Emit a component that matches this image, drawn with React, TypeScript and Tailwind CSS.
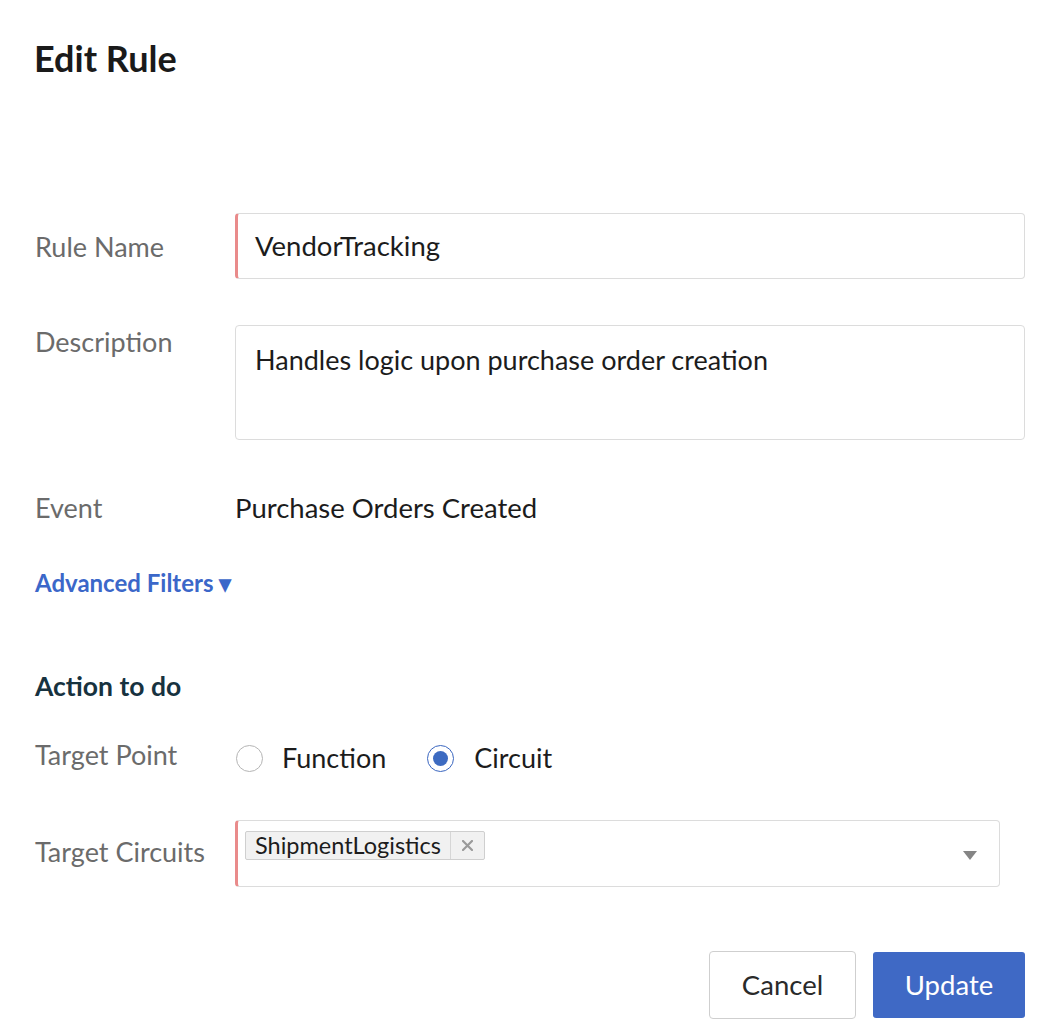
export default function App() {
  return (
    <div className="min-h-screen bg-white px-[35px] font-['Lato','Noto_Sans',sans-serif] text-[#1c1c1c]">
      <h1 className="pt-[37px] text-[36px] font-bold leading-[42px] text-[#1a1a1a] -ml-[1px]">Edit Rule</h1>

      <div className="mt-[134px] flex items-center">
        <div className="w-[200px] pt-[2px] text-[27px] leading-[34px] text-[#6b6b6b]">Rule Name</div>
        <div className="flex h-[66px] flex-1 items-center rounded-[4px] border border-l-[3px] border-[#dcdcdc] border-l-[#e98b8b] px-[17px] text-[27.5px]">
          VendorTracking
        </div>
      </div>

      <div className="mt-[46px] flex items-start">
        <div className="w-[200px] text-[27px] leading-[34px] text-[#6b6b6b]">Description</div>
        <div className="h-[115px] flex-1 rounded-[4px] border border-[#dcdcdc] px-[19px] pt-[17px] text-[27px] leading-[34px]">
          Handles logic upon purchase order creation
        </div>
      </div>

      <div className="mt-[51px] flex items-center">
        <div className="w-[200px] text-[27px] leading-[34px] text-[#6b6b6b]">Event</div>
        <div className="text-[27.5px] leading-[34px]">Purchase Orders Created</div>
      </div>

      <div className="mt-[43px] text-[24px] font-bold leading-[30px] text-[#3b67c9]">Advanced Filters ▾</div>

      <div className="mt-[72px] text-[26.5px] font-bold leading-[32px] text-[#17323f]">Action to do</div>

      <div className="mt-[35px] flex h-[36px] items-center">
        <div className="w-[201px] text-[27px] leading-[34px] text-[#6b6b6b]">Target Point</div>
        <div className="mt-[6px] flex items-center">
          <span className="h-[27px] w-[27px] rounded-full border border-[#b5b5b5]" />
          <span className="ml-[19px] text-[27px]">Function</span>
          <span className="ml-[41px] flex h-[27px] w-[27px] items-center justify-center rounded-full border border-[#3a66c0]">
            <span className="h-[15px] w-[15px] rounded-full bg-[#3d6bc1]" />
          </span>
          <span className="ml-[20px] text-[27px]">Circuit</span>
        </div>
      </div>

      <div className="mt-[47px] flex items-center">
        <div className="w-[200px] pb-[3px] text-[27px] leading-[34px] text-[#6b6b6b]">Target Circuits</div>
        <div className="flex h-[67px] w-[765px] items-start justify-between rounded-[4px] border border-l-[3px] border-[#dcdcdc] border-l-[#e98b8b] pl-[7px] pr-[22px] pt-[10px]">
          <div className="flex h-[29px] items-center rounded-[2px] border border-[#cfcfcf] bg-[#f1f1f1]">
            <span className="px-[9px] text-[23.5px] leading-[27px]">ShipmentLogistics</span>
            <span className="flex h-full w-[34px] items-center justify-center border-l border-[#d6d6d6]">
              <svg width="11" height="11" viewBox="0 0 11 11">
                <path d="M1 1l9 9M10 1l-9 9" stroke="#9a9a9a" strokeWidth="2.2" strokeLinecap="round" />
              </svg>
            </span>
          </div>
          <svg className="mt-[20px]" width="14" height="9" viewBox="0 0 14 9">
            <path d="M0 0h14L7 9z" fill="#858585" />
          </svg>
        </div>
      </div>

      <div className="mt-[64px] flex justify-end gap-[17px]">
        <button className="h-[68px] w-[147px] rounded-[4px] border border-[#cfcfcf] bg-white text-[27.5px] text-[#2a2a2a]">Cancel</button>
        <button className="mt-[1px] h-[66px] w-[152px] rounded-[3px] bg-[#3f69c5] text-[27.5px] text-white">Update</button>
      </div>
    </div>
  );
}
